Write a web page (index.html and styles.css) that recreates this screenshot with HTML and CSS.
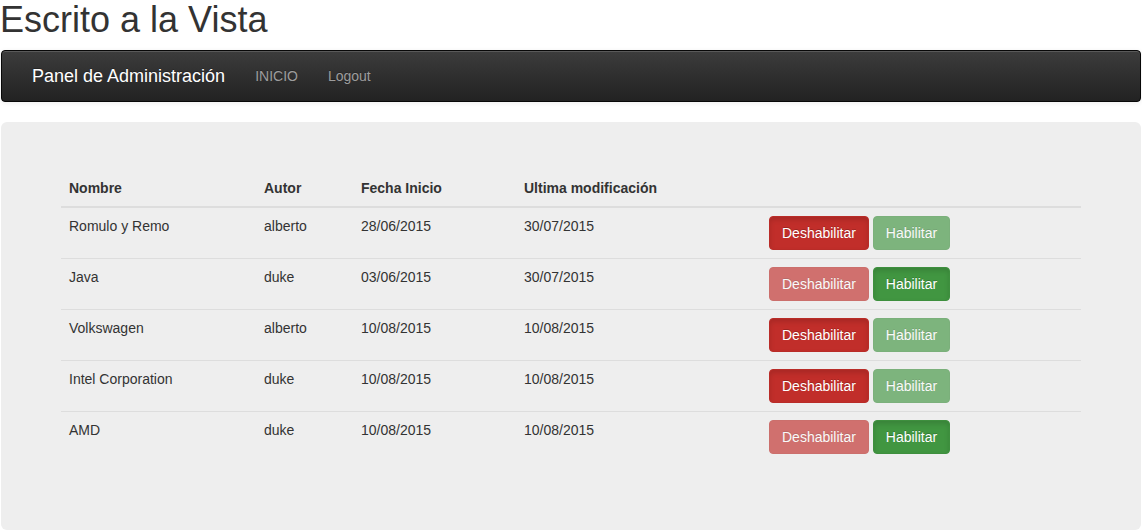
FILE: index.html
```html
<!DOCTYPE html>
<html lang="es">
<head>
<meta charset="utf-8">
<title>Escrito a la Vista</title>
<link rel="stylesheet" href="styles.css">
</head>
<body>
<h1 class="site-title">Escrito a la Vista</h1>
<nav class="navbar">
  <a class="brand" href="#">Panel de Administración</a>
  <ul class="nav">
    <li><a href="#">INICIO</a></li>
    <li><a href="#">Logout</a></li>
  </ul>
</nav>
<div class="jumbotron">
  <table class="table">
    <colgroup>
      <col class="c1"><col class="c2"><col class="c3"><col class="c4"><col class="c5">
    </colgroup>
    <thead>
      <tr><th>Nombre</th><th>Autor</th><th>Fecha Inicio</th><th>Ultima modificación</th><th></th></tr>
    </thead>
    <tbody>
      <tr><td>Romulo y Remo</td><td>alberto</td><td>28/06/2015</td><td>30/07/2015</td>
        <td><button class="btn btn-danger active">Deshabilitar</button> <button class="btn btn-success disabled">Habilitar</button></td></tr>
      <tr><td>Java</td><td>duke</td><td>03/06/2015</td><td>30/07/2015</td>
        <td><button class="btn btn-danger disabled">Deshabilitar</button> <button class="btn btn-success active">Habilitar</button></td></tr>
      <tr><td>Volkswagen</td><td>alberto</td><td>10/08/2015</td><td>10/08/2015</td>
        <td><button class="btn btn-danger active">Deshabilitar</button> <button class="btn btn-success disabled">Habilitar</button></td></tr>
      <tr><td>Intel Corporation</td><td>duke</td><td>10/08/2015</td><td>10/08/2015</td>
        <td><button class="btn btn-danger active">Deshabilitar</button> <button class="btn btn-success disabled">Habilitar</button></td></tr>
      <tr><td>AMD</td><td>duke</td><td>10/08/2015</td><td>10/08/2015</td>
        <td><button class="btn btn-danger disabled">Deshabilitar</button> <button class="btn btn-success active">Habilitar</button></td></tr>
    </tbody>
  </table>
</div>
</body>
</html>
```
FILE: styles.css
```css
* { box-sizing: border-box; }
html, body { margin: 0; padding: 0; }
body {
  font-family: "Liberation Sans", Arial, Helvetica, sans-serif;
  font-size: 14px;
  line-height: 1.42857143;
  color: #333;
  background: #fff;
}
.site-title {
  margin: 0 0 10px 0;
  font-size: 36px;
  font-weight: 500;
  line-height: 1.1;
  color: #333;
}
.navbar {
  display: flex;
  align-items: stretch;
  margin: 0 1px 20px 1px;
  min-height: 50px;
  padding: 0 15px;
  background-color: #222;
  background-image: linear-gradient(to bottom, #3c3c3c 0, #222 100%);
  border: 1px solid #080808;
  border-radius: 4px;
  box-shadow: inset 0 1px 0 rgba(255,255,255,.15), 0 1px 5px rgba(0,0,0,.075);
}
.brand {
  display: block;
  height: 50px;
  padding: 15px;
  font-size: 18px;
  line-height: 20px;
  color: #fff;
  text-decoration: none;
  text-shadow: 0 -1px 0 rgba(0,0,0,.25);
}
.nav {
  display: flex;
  list-style: none;
  margin: 0;
  padding: 0;
}
.nav a {
  display: block;
  padding: 15px;
  line-height: 20px;
  color: #9d9d9d;
  text-decoration: none;
  text-shadow: 0 -1px 0 rgba(0,0,0,.25);
}
.jumbotron {
  margin: 0 1px;
  padding: 48px 60px;
  background: #eee;
  border-radius: 6px;
}
.table {
  width: 100%;
  margin-bottom: 20px;
  border-collapse: collapse;
  border-spacing: 0;
  table-layout: fixed;
}
.c1 { width: 195px; }
.c2 { width: 97px; }
.c3 { width: 163px; }
.c4 { width: 245px; }
.c5 { width: 320px; }
.table th, .table td {
  padding: 8px;
  line-height: 20px;
  text-align: left;
  vertical-align: top;
}
.table th {
  font-weight: bold;
  vertical-align: bottom;
  border-bottom: 2px solid #ddd;
}
.table td {
  border-top: 1px solid #ddd;
}
.btn {
  display: inline-block;
  margin: 0;
  padding: 6px 12px;
  font-family: inherit;
  font-size: 14px;
  line-height: 1.42857143;
  color: #fff;
  text-shadow: 0 -1px 0 rgba(0,0,0,.2);
  border: 1px solid transparent;
  border-radius: 4px;
  vertical-align: middle;
  cursor: pointer;
}
.btn-danger { background-color: #c12e2a; border-color: #b92c28; }
.btn-success { background-color: #419641; border-color: #3e8f3e; }
.btn.active { box-shadow: inset 0 3px 5px rgba(0,0,0,.125); }
.btn.disabled { opacity: .65; box-shadow: none; cursor: not-allowed; }
```
